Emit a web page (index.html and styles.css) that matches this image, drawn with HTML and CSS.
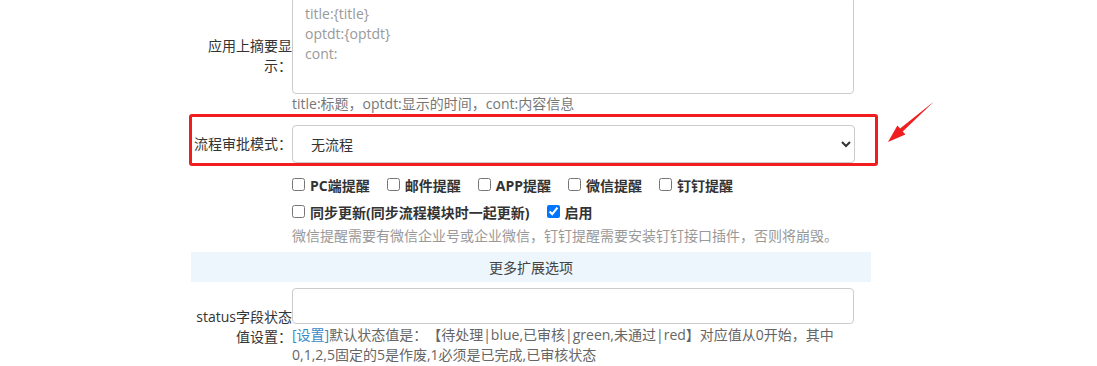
FILE: index.html
```html
<!DOCTYPE html>
<html lang="zh-CN">
<head>
    <meta charset="UTF-8">
    <title>流程设置</title>
    <link rel="stylesheet" href="styles.css">
</head>
<body>
    <table class="form-table">
        <tr class="row-summary">
            <td class="label">应用上摘要显示：</td>
            <td class="field">
                <textarea class="input-text" placeholder="title:{title}&#10;optdt:{optdt}&#10;cont:"></textarea>
                <div class="hint">title:标题，optdt:显示的时间，cont:内容信息</div>
            </td>
        </tr>
        <tr class="row-flow">
            <td class="label">流程审批模式：</td>
            <td class="field">
                <select class="input-select">
                    <option>无流程</option>
                </select>
            </td>
        </tr>
        <tr class="row-checks">
            <td class="label"></td>
            <td class="field">
                <div class="check-line">
                    <label class="check"><input type="checkbox">PC端提醒</label>
                    <label class="check"><input type="checkbox">邮件提醒</label>
                    <label class="check"><input type="checkbox">APP提醒</label>
                    <label class="check"><input type="checkbox">微信提醒</label>
                    <label class="check"><input type="checkbox">钉钉提醒</label>
                </div>
                <div class="check-line">
                    <label class="check"><input type="checkbox">同步更新(同步流程模块时一起更新)</label>
                    <label class="check"><input type="checkbox" checked>启用</label>
                </div>
                <div class="hint light">微信提醒需要有微信企业号或企业微信，钉钉提醒需要安装钉钉接口插件，否则将崩毁。</div>
            </td>
        </tr>
        <tr class="row-head">
            <td colspan="2">更多扩展选项</td>
        </tr>
        <tr class="row-status">
            <td class="label">status字段状态值设置：</td>
            <td class="field">
                <input type="text" class="input-text">
                <div class="hint dark"><a href="#">[设置]</a>默认状态值是：【待处理|blue,已审核|green,未通过|red】对应值从0开始，其中0,1,2,5固定的5是作废,1必须是已完成,已审核状态</div>
            </td>
        </tr>
    </table>

    <!-- 标注 -->
    <div class="mark-box"></div>
    <svg class="mark-arrow" width="60" height="55" viewBox="0 0 60 55">
        <polygon points="54,6.5 22.7,36.5 25.4,39.5 8,47 17.4,30.5 20.1,33.5" fill="#f01e1e"/>
    </svg>
</body>
</html>
```

FILE: styles.css
```css
body {
    margin: 0;
    position: relative;
    font-family: 'Open Sans', 'Noto Sans CJK SC', sans-serif;
    font-size: 14px;
    color: #333;
    background: #fff;
    text-spacing-trim: space-all;
}

.form-table {
    border-collapse: collapse;
    width: 680px;
    margin: -7px 0 0 191px;
}

.form-table td {
    padding: 0;
}

.label {
    width: 102px;
    text-align: right;
    vertical-align: middle;
    line-height: 20px;
}

.field {
    padding-right: 16px !important;
    vertical-align: top;
}

.row-summary td { padding-top: 4px; padding-bottom: 4px; }
.row-flow td { padding-top: 7px; padding-bottom: 4px; }
.row-checks td { padding-top: 4px; padding-bottom: 5px; }
.row-status td { padding-top: 6px; padding-bottom: 2px; }

.input-text {
    display: block;
    box-sizing: border-box;
    width: 562px;
    border: 1px solid #ccc;
    border-radius: 4px;
    font-family: inherit;
    font-size: 14px;
    color: #555;
    outline: none;
}

textarea.input-text {
    height: 97px;
    padding: 6px 12px;
    line-height: 20px;
    resize: none;
}

textarea.input-text::placeholder {
    color: #999;
}

input.input-text {
    height: 36px;
    padding: 6px 12px;
}

.input-select {
    display: block;
    box-sizing: border-box;
    width: 563px;
    height: 38px;
    padding: 0 8px 0 14px;
    border: 1px solid #ccc;
    border-radius: 4px;
    background: #fff;
    font-family: inherit;
    font-size: 14px;
    color: #333;
}

.hint {
    line-height: 20px;
    color: #777;
}

.hint.light {
    color: #999;
    line-height: 22px;
}

.hint.dark {
    color: #666;
    margin-top: 1px;
}

.hint a {
    color: #3a8ac8;
    text-decoration: none;
}

.check-line {
    height: 27px;
    display: flex;
    align-items: center;
    gap: 17px;
}

.check {
    display: flex;
    align-items: center;
    font-weight: bold;
    color: #333;
}

.check input {
    width: 13px;
    height: 13px;
    margin: 0 5px 0 0;
}

.row-head td {
    height: 30px;
    background: #edf6fc;
    text-align: center;
    color: #444;
}

/* 标注红框和箭头 */
.mark-box {
    position: absolute;
    left: 189px;
    top: 114px;
    width: 683px;
    height: 46px;
    border: 3px solid #f01e1e;
    border-radius: 3px;
}

.mark-arrow {
    position: absolute;
    left: 880px;
    top: 95px;
}
```
